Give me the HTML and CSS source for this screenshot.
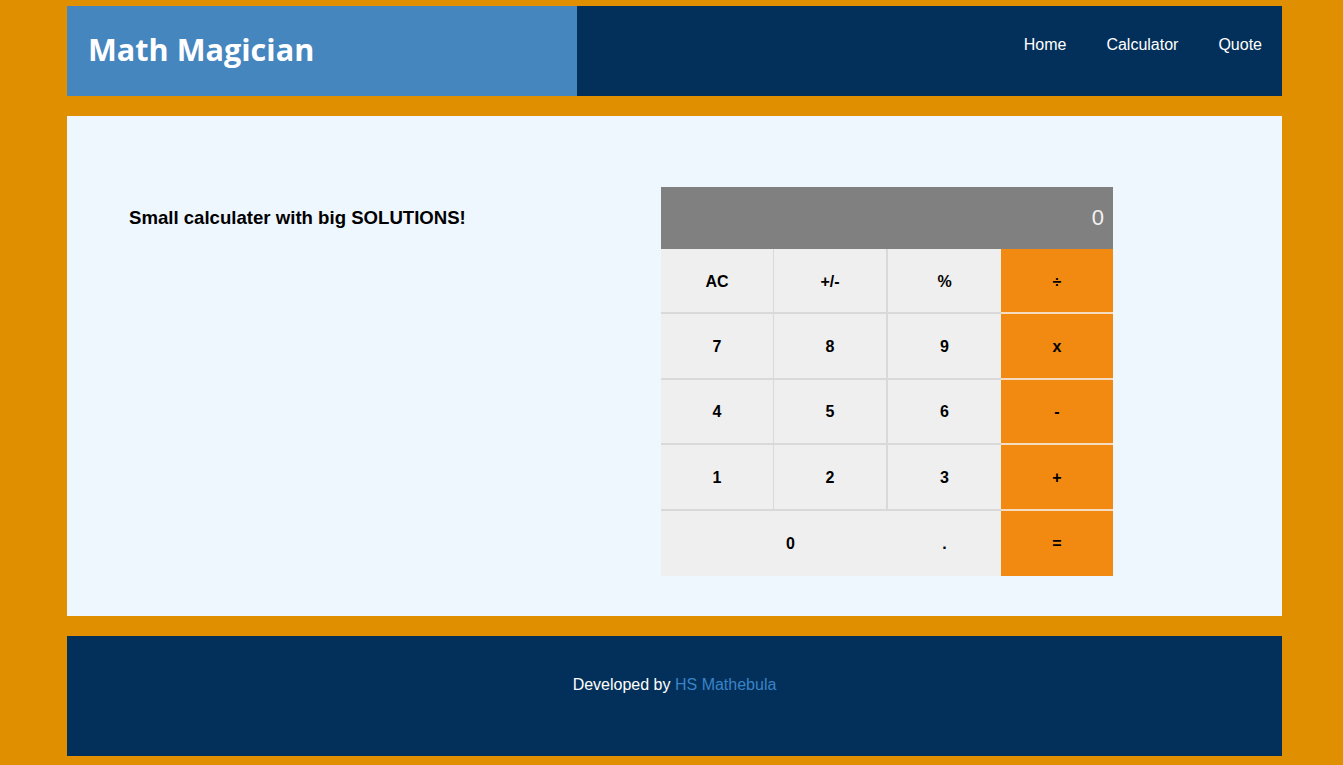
FILE: index.html
```html
<!DOCTYPE html>
<html lang="en">
<head>
<meta charset="utf-8">
<title>Math Magician</title>
<link rel="stylesheet" href="styles.css">
</head>
<body>
<div class="page">
  <header class="header">
    <div class="brand"><h1 class="logo">Math Magician</h1></div>
    <nav class="nav">
      <a class="nav-link" href="#">Home</a>
      <a class="nav-link" href="#">Calculator</a>
      <a class="nav-link" href="#">Quote</a>
    </nav>
  </header>
  <main class="main">
    <div class="intro"><h2 class="tagline">Small calculater with big SOLUTIONS!</h2></div>
    <div class="calc">
      <div class="display">0</div>
      <div class="keys">
        <button class="key">AC</button>
        <button class="key">+/-</button>
        <button class="key">%</button>
        <button class="key op">÷</button>
        <button class="key">7</button>
        <button class="key">8</button>
        <button class="key">9</button>
        <button class="key op">x</button>
        <button class="key">4</button>
        <button class="key">5</button>
        <button class="key">6</button>
        <button class="key op">-</button>
        <button class="key">1</button>
        <button class="key">2</button>
        <button class="key">3</button>
        <button class="key op">+</button>
        <button class="key zero">0</button>
        <button class="key dot">.</button>
        <button class="key op last">=</button>
      </div>
    </div>
  </main>
  <footer class="footer">
    <p class="credit">Developed by <a class="credit-link" href="#">HS Mathebula</a></p>
  </footer>
</div>
</body>
</html>
```

FILE: styles.css
```css
* { box-sizing: border-box; }
html, body { margin: 0; padding: 0; }
body {
  background: #e08f00;
  font-family: "Liberation Sans", Arial, sans-serif;
}
.page {
  width: 1215px;
  margin-left: 67px;
  padding-top: 6px;
  display: flex;
  flex-direction: column;
  gap: 20px;
}
.header {
  height: 90px;
  display: flex;
  background: #03305a;
}
.brand {
  width: 510px;
  background: #4586bf;
  display: flex;
  align-items: center;
  padding-left: 21px;
  padding-bottom: 4px;
}
.logo {
  margin: 0;
  color: #fff;
  font-family: "Open Sans", "Noto Sans", sans-serif;
  font-weight: 700;
  font-size: 30.6px;
}
.nav {
  flex: 1;
  display: flex;
  justify-content: flex-end;
  align-items: center;
  gap: 40px;
  padding-right: 20px;
  padding-bottom: 12px;
}
.nav-link {
  color: #fff;
  text-decoration: none;
  font-size: 16px;
}
.main {
  height: 500px;
  background: #eff7fe;
  display: flex;
  padding: 71px 0 40px 62px;
}
.intro {
  width: 532px;
  padding-top: 20px;
}
.tagline {
  margin: 0;
  font-size: 18.6px;
  font-weight: 700;
  color: #000;
  line-height: 21px;
}
.calc {
  width: 452px;
  display: flex;
  flex-direction: column;
}
.display {
  height: 62px;
  background: #808080;
  color: #f2f2f2;
  font-size: 22px;
  display: flex;
  align-items: center;
  justify-content: flex-end;
  padding-right: 9px;
}
.keys {
  display: grid;
  grid-template-columns: 113px 114px 113px 112px;
  grid-template-rows: repeat(5, 65.4px);
}
.key {
  margin: 0;
  border: 0;
  border-right: 1px solid #d9d9d9;
  border-bottom: 2px solid #d9d9d9;
  background: #efefef;
  font-family: "Liberation Sans", Arial, sans-serif;
  font-weight: 700;
  font-size: 16px;
  color: #000;
  padding: 2px 0 0;
}
.key:nth-child(4n+2) { border-right-width: 2px; }
.key:nth-child(4n+3) { border-right: 0; }
.op {
  background: #f28911;
  border-right: 0;
  border-bottom: 2px solid #f5dcc0;
}
.zero {
  grid-column: span 2;
  padding-left: 32px;
  border-right: 0;
  border-bottom: 0;
}
.dot {
  border-bottom: 0;
  border-right: 0;
}
.last { border-bottom: 0; }
.footer {
  height: 120px;
  background: #03305a;
  display: flex;
  justify-content: center;
  padding-top: 40px;
}
.credit {
  margin: 0;
  color: #fff;
  font-size: 16px;
}
.credit-link {
  color: #3a83c8;
  text-decoration: none;
}
```
